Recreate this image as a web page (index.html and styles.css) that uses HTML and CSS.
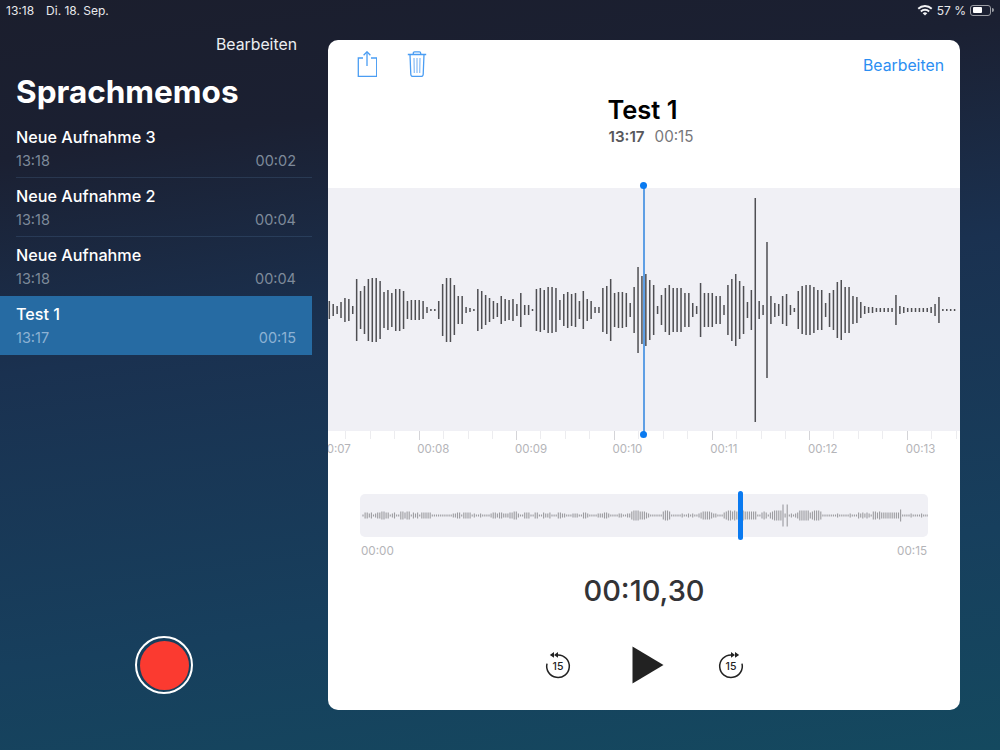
FILE: index.html
```html
<!DOCTYPE html>
<html lang="de">
<head>
  <meta charset="UTF-8" />
  <title>Sprachmemos</title>
  <link rel="stylesheet" href="styles.css">
</head>
<body>
  <div class="statusbar">
    <div class="status-left">
      <span>13:18</span>
      <span>Di. 18. Sep.</span>
    </div>
    <div class="status-right">
      <svg class="wifi" width="16" height="12" viewBox="0 0 16 12">
        <path d="M0.6 4.1a10.6 10.6 0 0 1 14.8 0l-1.3 1.4a8.7 8.7 0 0 0-12.2 0z" />
        <path d="M3.2 6.8a6.9 6.9 0 0 1 9.6 0l-1.3 1.4a5 5 0 0 0-7 0z" />
        <path d="M5.7 9.3a3.3 3.3 0 0 1 4.6 0L8 11.6z" />
      </svg>
      <span>57 %</span>
      <div class="battery"><div class="battery-level"></div></div>
    </div>
  </div>

  <div class="app">
    <aside class="sidebar">
      <div class="sidebar-edit">Bearbeiten</div>
      <h1>Sprachmemos</h1>
      <ul class="memo-list">
        <li class="memo">
          <div class="memo-name">Neue Aufnahme 3</div>
          <div class="memo-meta"><span>13:18</span><span>00:02</span></div>
        </li>
        <li class="memo">
          <div class="memo-name">Neue Aufnahme 2</div>
          <div class="memo-meta"><span>13:18</span><span>00:04</span></div>
        </li>
        <li class="memo">
          <div class="memo-name">Neue Aufnahme</div>
          <div class="memo-meta"><span>13:18</span><span>00:04</span></div>
        </li>
        <li class="memo memo-active">
          <div class="memo-name">Test 1</div>
          <div class="memo-meta"><span>13:17</span><span>00:15</span></div>
        </li>
      </ul>
      <div class="record-row">
        <button class="record-btn"><span class="record-dot"></span></button>
      </div>
    </aside>

    <main class="card">
      <div class="toolbar">
        <div class="toolbar-icons">
          <svg width="20" height="26" viewBox="0 0 20 26" class="tool-icon">
            <path d="M6 7H1.300v18.500h18.400V7H14" />
            <path d="M10 15V1" />
            <path d="M6.600 4.200L10 0.800l3.400 3.400" />
          </svg>
          <svg width="20" height="26" viewBox="0 0 20 26" class="tool-icon">
            <path d="M0.800 3.500h18.400" />
            <path d="M6.300 3.500V2.200c0-.8.500-1.300 1.300-1.300h4.800c.8 0 1.300.5 1.300 1.300v1.300" />
            <path d="M3 3.500l.8 20c.1 1.200.8 2 2 2h8.400c1.200 0 1.900-.8 2-2l.8-20" />
            <path class="tool-ribs" d="M7 7l.3 15M10 7v15M13 7l-.3 15" />
          </svg>
        </div>
        <div class="toolbar-edit">Bearbeiten</div>
      </div>

      <div class="title-block">
        <h2>Test 1</h2>
        <div class="title-meta"><span class="title-time">13:17</span><span>00:15</span></div>
      </div>

      <div class="wave-wrap">
        <svg id="wave" class="wave" width="632" height="243"></svg>
        <div class="playhead"></div>
      </div>

      <div class="ruler">
        <div class="sec">00:07</div>
        <div class="sec">00:08</div>
        <div class="sec">00:09</div>
        <div class="sec">00:10</div>
        <div class="sec">00:11</div>
        <div class="sec">00:12</div>
        <div class="sec">00:13</div>
      </div>

      <div class="overview">
        <div class="mini-track">
          <svg id="mini" width="568" height="43"></svg>
          <div class="mini-handle"></div>
        </div>
        <div class="mini-labels"><span>00:00</span><span>00:15</span></div>
      </div>

      <div class="timer">00:10,30</div>

      <div class="controls">
        <svg class="skip skip-back" width="30" height="32" viewBox="0 0 30 32">
          <path class="skip-arc" d="M15 5.900A11.300 11.300 0 1 1 4 14.600" />
          <path class="skip-head" d="M15 3.100v5.600L11 5.900zM11 3.100v5.600L6.800 5.900z" />
          <text x="15" y="21.200" text-anchor="middle">15</text>
        </svg>
        <svg class="play" width="32" height="38" viewBox="0 0 32 38">
          <path d="M0.500 0.500L31.500 19 0.500 37.500z" />
        </svg>
        <svg class="skip" width="30" height="32" viewBox="0 0 30 32">
          <path class="skip-arc" d="M15 5.900A11.300 11.300 0 1 0 26 14.600" />
          <path class="skip-head" d="M15 3.100v5.600l4-2.800zM19 3.100v5.600l4.200-2.800z" />
          <text x="15" y="21.200" text-anchor="middle">15</text>
        </svg>
      </div>
    </main>
  </div>

  <script src="waveform.js"></script>
</body>
</html>
```

FILE: styles.css
```css
:root {
  --blue: #2b8ef2;
  --handle: #0a7af0;
  --track: #f0f0f5;
  --label: #b4b4b8;
  --font: Inter, "Liberation Sans", sans-serif;
}

* {
  box-sizing: border-box;
}

body {
  margin: 0;
  width: 1000px;
  height: 750px;
  overflow: hidden;
  font-family: var(--font);
  color: white;
  background: linear-gradient(172deg, #1b1e2d 0%, #1b2032 18%, #1a3150 42%, #173f5d 75%, #14495f 100%);
}

.statusbar {
  height: 20px;
  padding: 0 7px 0 6px;
  display: flex;
  justify-content: space-between;
  align-items: center;
  font-size: 12px;
  color: #e8e9ec;
}

.status-left {
  display: flex;
  gap: 12px;
}

.status-right {
  display: flex;
  align-items: center;
  gap: 4px;
}

.wifi {
  fill: #f2f2f4;
}

.battery {
  width: 21px;
  height: 11px;
  padding: 1.500px;
  border: 1px solid #9b9da4;
  border-radius: 3px;
  position: relative;
  margin-right: 2px;
}

.battery::after {
  content: "";
  position: absolute;
  right: -3.500px;
  top: 2.500px;
  width: 2px;
  height: 4px;
  border-radius: 0 2px 2px 0;
  background: #9b9da4;
}

.battery-level {
  width: 57%;
  height: 100%;
  border-radius: 1px;
  background: white;
}

.app {
  height: 730px;
  display: flex;
}

/* linke Spalte */
.sidebar {
  width: 312px;
  margin-right: 16px;
  display: flex;
  flex-direction: column;
}

.sidebar-edit {
  padding: 15px 15px 0 0;
  text-align: right;
  font-size: 15.800px;
  line-height: 20px;
  color: #eceef2;
}

h1 {
  margin: 17px 0 0 16px;
  font-size: 31.500px;
  line-height: 40px;
  font-weight: 700;
}

.memo-list {
  list-style: none;
  margin: 7px 0 0;
  padding: 0;
}

.memo {
  height: 59px;
  padding: 8px 16px 0;
  position: relative;
}

.memo:not(.memo-active):not(:nth-child(3))::after {
  content: "";
  position: absolute;
  left: 16px;
  right: 0;
  bottom: 0;
  height: 1px;
  background: rgba(120, 170, 220, 0.16);
}

.memo-active {
  background: #266ba3;
}

.memo-name {
  font-size: 16.200px;
  line-height: 20px;
  font-weight: 500;
}

.memo-meta {
  margin-top: 5px;
  display: flex;
  justify-content: space-between;
  font-size: 14.500px;
  line-height: 18px;
  color: #7e8a9a;
}

.memo-active .memo-meta {
  color: #8db2d4;
}

.record-row {
  margin-top: auto;
  padding-bottom: 56px;
  display: flex;
  justify-content: center;
  padding-left: 16px;
}

.record-btn {
  width: 58px;
  height: 58px;
  padding: 0;
  border: 2.500px solid white;
  border-radius: 50%;
  background: none;
  display: flex;
  justify-content: center;
  align-items: center;
}

.record-dot {
  width: 49px;
  height: 49px;
  border-radius: 50%;
  background: #fb3a30;
}

/* Karte rechts */
.card {
  width: 632px;
  height: 670px;
  margin-top: 20px;
  border-radius: 10px;
  background: white;
  overflow: hidden;
  display: flex;
  flex-direction: column;
}

.toolbar {
  height: 50px;
  padding: 0 16px 0 29px;
  display: flex;
  justify-content: space-between;
  align-items: center;
}

.toolbar-icons {
  display: flex;
  gap: 30px;
  margin-top: -2px;
}

.tool-icon {
  fill: none;
  stroke: #4a9df3;
  stroke-width: 1.300;
}

.tool-ribs {
  stroke: #8fc0f6;
}

.toolbar-edit {
  font-size: 15.800px;
  color: var(--blue);
}

.title-block {
  height: 98px;
  padding-top: 5px;
  text-align: center;
}

h2 {
  margin: 0;
  padding-right: 3px;
  font-size: 25.500px;
  line-height: 30px;
  font-weight: 600;
  color: black;
}

.title-meta {
  margin-top: 3px;
  display: flex;
  justify-content: center;
  gap: 10px;
  padding-left: 14px;
  font-size: 15.200px;
  line-height: 18px;
  color: #77777b;
}

.title-time {
  font-weight: 600;
  color: #58585c;
}

.wave-wrap {
  height: 243px;
  position: relative;
  background: var(--track);
}

.wave {
  display: block;
}

.wave rect {
  fill: #4f4f53;
}

.playhead {
  position: absolute;
  left: 315.200px;
  top: -3px;
  width: 1.500px;
  height: 250px;
  background: #5f9fe4;
}

.playhead::before,
.playhead::after {
  content: "";
  position: absolute;
  left: -2.750px;
  width: 7px;
  height: 7px;
  border-radius: 50%;
  background: var(--handle);
}

.playhead::before {
  top: -3px;
}

.playhead::after {
  bottom: -3px;
}

.ruler {
  margin-left: -7px;
  height: 63px;
  display: flex;
}

.sec {
  flex: none;
  width: 97.700px;
  height: 26px;
  padding: 11px 0 0 0;
  text-indent: -2.500px;
  font-size: 11.500px;
  line-height: 14px;
  color: var(--label);
  border-left: 1px solid #d8d8dc;
  background: repeating-linear-gradient(90deg, transparent 0, transparent 23.400px, #ececef 23.400px, #ececef 24.400px) 0 0 / 100% 8px no-repeat;
  background-clip: padding-box;
  border-image: linear-gradient(#d4d4d8 0, #d4d4d8 9px, transparent 9px) 1;
}

.overview {
  padding: 0 32px;
}

.mini-track {
  height: 43px;
  position: relative;
  border-radius: 5px;
  background: var(--track);
}

.mini-track svg {
  display: block;
}

.mini-track rect {
  fill: #9b9b9f;
}

.mini-handle {
  position: absolute;
  left: 378px;
  top: -3px;
  width: 5px;
  height: 49px;
  border-radius: 3px;
  background: var(--handle);
}

.mini-labels {
  margin-top: 7px;
  display: flex;
  justify-content: space-between;
  padding: 0 1px;
  font-size: 11.700px;
  line-height: 14px;
  color: var(--label);
}

.timer {
  margin-top: 16px;
  text-align: center;
  font-size: 29px;
  line-height: 34px;
  font-weight: 500;
  color: #333336;
}

.controls {
  margin-top: 38px;
  display: flex;
  justify-content: center;
  align-items: center;
  gap: 52px;
}

.skip-back {
  margin-right: 7px;
}

.skip-arc {
  fill: none;
  stroke: #222;
  stroke-width: 1.500;
}

.skip-head {
  fill: #222;
}

.skip text {
  font-family: var(--font);
  font-size: 10.500px;
  font-weight: 500;
  fill: #222;
}

.play {
  fill: #222;
}
```

FILE: waveform.js
```js
// half heights read off the recording, one per bar
const waveBars = [
  9, 6, 4, 8, 12, 11, 4, 31, 19, 24, 31, 32, 32, 29, 18, 20, 17, 21, 21, 19,
  9, 10, 10, 10, 9, 3, 1, 1, 9, 26, 32, 32, 25, 14, 14, 3, 2, 1, 21, 19,
  15, 12, 9, 7, 14, 11, 10, 11, 6, 17, 5, 5, 1, 21, 22, 20, 23, 23, 22, 10,
  16, 18, 16, 17, 9, 19, 11, 9, 3, 3, 22, 24, 31, 17, 18, 18, 17, 7, 23, 43,
  34, 36, 30, 25, 4, 15, 22, 25, 22, 22, 22, 17, 17, 7, 4, 27, 17, 17, 17, 14,
  14, 5, 25, 31, 36, 29, 24, 8, 20, 112, 9, 5, 68, 14, 7, 6, 14, 16, 5, 2,
  19, 24, 25, 25, 23, 20, 20, 7, 17, 20, 28, 30, 23, 23, 14, 13, 8, 4, 3, 3,
  2, 2, 2, 2, 2, 15, 4, 3, 2, 2, 2, 2, 2, 2, 3, 6, 13, 1, 1, 1, 1
];

// ten bars per 21px of track
const miniBars = [
  "1332312334", "4331231144", "3441323133", "3331111111", "1112233133",
  "3312112111", "1233233222", "3344211333", "1133113223", "1113322111",
  "2221133211", "1122233211", "1122112245", "5544432111", "1114554111",
  "1121121211", "2344443221", "1134554545", "5544444411", "3431345555",
  "b2b1212355", "5553455541", "1111112111", "1121113232", "3214434333",
  "3333336111", "1211112111"
].join("").split("").map(c => parseInt(c, 16));

function drawBars(id, bars, startX, step, width, centerY) {
  const svg = document.getElementById(id);
  bars.forEach((half, i) => {
    const rect = document.createElementNS("http://www.w3.org/2000/svg", "rect");
    rect.setAttribute("x", startX + i * step - width / 2);
    rect.setAttribute("y", centerY - half);
    rect.setAttribute("width", width);
    rect.setAttribute("height", half * 2);
    svg.appendChild(rect);
  });
}

drawBars("wave", waveBars, 1.300, 3.908, 1.500, 122);
drawBars("mini", miniBars, 3, 2.100, 1.100, 21.500);
```
